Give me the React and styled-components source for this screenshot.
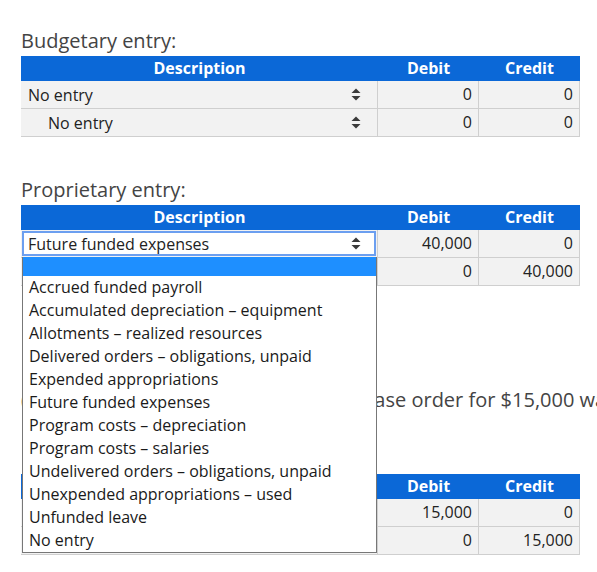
import styled, { createGlobalStyle } from 'styled-components';

const GlobalStyle = createGlobalStyle`
  html, body {
    margin: 0;
    padding: 0;
    overflow: hidden;
    background: #fff;
    font-family: "Open Sans", "Liberation Sans", sans-serif;
  }
`;

const options = [
  'Accrued funded payroll',
  'Accumulated depreciation – equipment',
  'Allotments – realized resources',
  'Delivered orders – obligations, unpaid',
  'Expended appropriations',
  'Future funded expenses',
  'Program costs – depreciation',
  'Program costs – salaries',
  'Undelivered orders – obligations, unpaid',
  'Unexpended appropriations – used',
  'Unfunded leave',
  'No entry',
];

const Arrows = () => (
  <svg width="10" height="13" viewBox="0 0 10 13">
    <path d="M5 0.5 L9.5 5 L0.5 5 Z" fill="#3a3a3a" />
    <path d="M0.5 8 L9.5 8 L5 12.5 Z" fill="#3a3a3a" />
  </svg>
);

const EntrySelect = ({ value, indent, open }) => (
  <SelectWrap>
    <SelectBox $indent={indent} $open={open}>
      <span>{value}</span>
      <Arrows />
    </SelectBox>
    {open && (
      <ListBox>
        <Option $active />
        {options.map((o) => (
          <Option key={o}>{o}</Option>
        ))}
      </ListBox>
    )}
  </SelectWrap>
);

const EntryTable = ({ rows }) => (
  <Grid>
    <Head>Description</Head>
    <Head>Debit</Head>
    <Head>Credit</Head>
    {rows.map((r, i) => (
      <Row key={i}>
        <DescCell>
          <EntrySelect value={r.desc} indent={i === 1} open={r.open} />
        </DescCell>
        <NumCell>{r.debit}</NumCell>
        <NumCell>{r.credit}</NumCell>
      </Row>
    ))}
  </Grid>
);

export default function App() {
  return (
    <>
      <GlobalStyle />
      <Page>
        <Section>
          <Title>Budgetary entry:</Title>
          <EntryTable
            rows={[
              { desc: 'No entry', debit: '0', credit: '0' },
              { desc: 'No entry', debit: '0', credit: '0' },
            ]}
          />
        </Section>
        <Section>
          <Title>Proprietary entry:</Title>
          <EntryTable
            rows={[
              { desc: 'Future funded expenses', debit: '40,000', credit: '0', open: true },
              { desc: 'Future funded expenses', debit: '0', credit: '40,000' },
            ]}
          />
        </Section>
        <Question>(2) On October 10, an approved purchase order for $15,000 was placed for office supplies.</Question>
        <Section>
          <Title>Budgetary entry:</Title>
          <EntryTable
            rows={[
              { desc: 'Undelivered orders – obligations, unpaid', debit: '15,000', credit: '0' },
              { desc: 'Allotments – realized resources', debit: '0', credit: '15,000' },
            ]}
          />
        </Section>
      </Page>
    </>
  );
}

const Page = styled.div`
  padding: 27px 0 0 21px;
  width: 559px;
`;

const Section = styled.section`
  margin-bottom: 39px;
  position: relative;
`;

const Title = styled.div`
  font-size: 20px;
  line-height: 27px;
  color: #444;
  margin-bottom: 2px;
`;

const Question = styled.div`
  font-size: 20px;
  line-height: 27px;
  color: #444;
  white-space: nowrap;
  margin: 100px 0 32px;
`;

const Grid = styled.div`
  display: grid;
  grid-template-columns: 357px 101px 101px;
  background: #f2f2f2;
`;

const Head = styled.div`
  background: #0b68d7;
  color: #fff;
  font-weight: 700;
  font-size: 16px;
  height: 25px;
  line-height: 24px;
  text-align: center;
`;

const Row = styled.div`
  display: contents;
`;

const Cell = styled.div`
  height: 27px;
  border-bottom: 1px solid #cfcfcf;
  border-right: 1px solid #cfcfcf;
  box-sizing: content-box;
  font-size: 16px;
  color: #222;
`;

const DescCell = styled(Cell)`
  padding: 1px 1px 0 1px;
  height: 26px;
  box-sizing: content-box;
  width: 354px;
`;

const NumCell = styled(Cell)`
  text-align: right;
  padding-right: 6px;
  line-height: 27px;
  width: 94px;
`;

const SelectWrap = styled.div`
  position: relative;
  height: 25px;
`;

const SelectBox = styled.div`
  box-sizing: border-box;
  height: 25px;
  display: flex;
  align-items: center;
  justify-content: space-between;
  padding: 0 13px 0 ${(p) => (p.$indent ? 26 : 6)}px;
  font-size: 16px;
  color: #222;
  background: ${(p) => (p.$open ? '#fff' : 'transparent')};
  border: 2px solid ${(p) => (p.$open ? '#6c9ff0' : 'transparent')};
  span {
    margin-left: -2px;
  }
`;

const ListBox = styled.div`
  position: absolute;
  z-index: 10;
  top: 26px;
  left: 0;
  width: 355px;
  box-sizing: border-box;
  background: #fff;
  border: 1px solid #777;
  border-top: none;
`;

const Option = styled.div`
  height: ${(p) => (p.$active ? 19 : 23)}px;
  line-height: 23px;
  padding-left: 6px;
  font-size: 16px;
  color: #1a1a1a;
  background: ${(p) => (p.$active ? '#1e8fff' : '#fff')};
  white-space: nowrap;
`;
